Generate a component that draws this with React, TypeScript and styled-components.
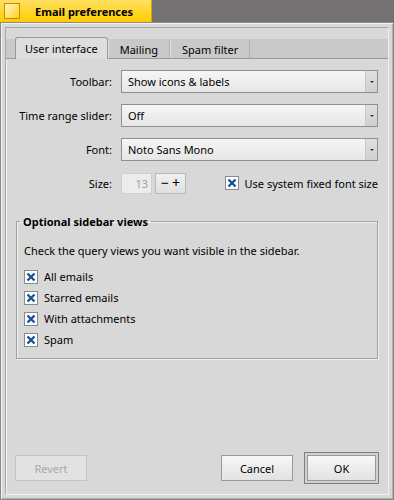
import React from "react"
import styled, { createGlobalStyle } from "styled-components"

const GlobalStyle = createGlobalStyle`
  html, body {
    margin: 0;
    padding: 0;
    background: #737172;
  }
  body {
    font-family: "Noto Sans", "DejaVu Sans", sans-serif;
    font-size: 11px;
    color: #000;
  }
`

const Window = styled.div`
  width: 394px;
  height: 500px;
  display: flex;
  flex-direction: column;
`

const TitleTab = styled.div`
  width: 152px;
  height: 22px;
  box-sizing: border-box;
  display: flex;
  align-items: center;
  gap: 15px;
  padding-left: 4px;
  background: linear-gradient(#ffe162, #ffcb00);
  border-right: 1px solid #d7a400;
  font-weight: 700;
  font-size: 11px;
`

const CloseBox = styled.div`
  width: 14px;
  height: 14px;
  border: 1px solid #c09000;
  background: linear-gradient(135deg, #fff6c4, #ffd020);
`

const Frame = styled.div`
  flex: 1;
  box-sizing: border-box;
  border: 1px solid #8a8a8a;
  box-shadow: inset 1px 1px 0 #f2f2f2, inset -1px -1px 0 #b0b0b0;
  background: #d8d8d8;
  padding: 4px;
  display: flex;
`

const Inner = styled.div`
  flex: 1;
  min-width: 0;
  border: 1px solid #a8a8a8;
  border-bottom-color: #f0f0f0;
  border-right-color: #f0f0f0;
  display: flex;
  flex-direction: column;
  padding-top: 8px;
`

const TabStrip = styled.div`
  display: flex;
  align-items: flex-end;
  height: 22px;
  padding-left: 9px;
  background: linear-gradient(#d8d8d8 0, #d8d8d8 3px, #c9c9c9 3px);
  border-bottom: 1px solid #9a9a9a;
`

const Tab = styled.div<{ $active?: boolean }>`
  box-sizing: border-box;
  height: ${p => (p.$active ? "22px" : "18px")};
  padding: 0 ${p => (p.$active ? "9px" : "11px")};
  display: flex;
  align-items: center;
  background: ${p => (p.$active ? "#dedede" : "#c9c9c9")};
  border: 1px solid ${p => (p.$active ? "#9a9a9a" : "#b3b3b3")};
  border-bottom: none;
  border-top: ${p => (p.$active ? "1px solid #9a9a9a" : "none")};
  border-left-color: ${p => (p.$active ? "#9a9a9a" : "#e0e0e0")};
  border-radius: ${p => (p.$active ? "3px 3px 0 0" : "0")};
  margin-bottom: ${p => (p.$active ? "-1px" : "0")};
  position: relative;
  z-index: ${p => (p.$active ? 1 : 0)};
`

const TabBody = styled.div`
  flex: 1;
  background: #d8d8d8;
  border-left: 1px solid #f4f4f4;
  padding: 11px 10px 0 8px;
  display: flex;
  flex-direction: column;
`

const FormGrid = styled.div`
  display: grid;
  grid-template-columns: 1fr 257px;
  column-gap: 9px;
  row-gap: 11px;
  align-items: center;
`

const Label = styled.div`
  text-align: right;
  white-space: nowrap;
`

const Select = styled.div`
  height: 23px;
  box-sizing: border-box;
  border: 1px solid #8f8f8f;
  display: flex;
  background: linear-gradient(#f6f6f6, #e6e6e6);
`

const SelectText = styled.div`
  flex: 1;
  display: flex;
  align-items: center;
  padding-left: 6px;
`

const SelectArrow = styled.div`
  width: 11px;
  border-left: 1px solid #c8c8c8;
  background: linear-gradient(#e0e0e0, #cfcfcf);
  display: flex;
  align-items: center;
  justify-content: center;
  &::after {
    content: "";
    border-left: 2px solid transparent;
    border-right: 2px solid transparent;
    border-top: 2px solid #333;
  }
`

const SizeRow = styled.div`
  display: flex;
  align-items: center;
  gap: 3px;
  height: 22px;
`

const NumberBox = styled.div`
  width: 31px;
  height: 21px;
  box-sizing: border-box;
  border: 1px solid #cfcfcf;
  background: #ececec;
  color: #a0a0a0;
  display: flex;
  align-items: center;
  justify-content: flex-end;
  padding-right: 3px;
`

const StepButton = styled.div`
  width: 31px;
  height: 21px;
  box-sizing: border-box;
  border: 1px solid #b8b8b8;
  background: linear-gradient(#f0f0f0, #e0e0e0);
  display: flex;
  align-items: center;
  justify-content: center;
  gap: 3px;
  font-size: 14px;
  line-height: 1;
`

const CheckRow = styled.label<{ $push?: boolean }>`
  display: flex;
  align-items: center;
  gap: 6px;
  margin-left: ${p => (p.$push ? "auto" : "0")};
  height: 21px;
`

const Group = styled.fieldset`
  margin: 20px 0 0 1px;
  padding: 1px 7px 8px 7px;
  border: 1px solid #a0a0a0;
  box-shadow: 1px 1px 0 #f0f0f0, inset 1px 1px 0 #f0f0f0;
  display: flex;
  flex-direction: column;
`

const Legend = styled.legend`
  font-weight: 700;
  font-size: 11px;
  padding: 0 3px;
  margin-left: -4px;
`

const Hint = styled.div`
  margin: 13px 0 8px 0;
`

const Buttons = styled.div`
  display: flex;
  align-items: center;
  gap: 14px;
  padding: 14px 2px 13px 0;
`

const Button = styled.div<{ $disabled?: boolean; $default?: boolean }>`
  width: ${p => (p.$default ? "69px" : "72px")};
  height: 26px;
  box-sizing: border-box;
  border: 1px solid ${p => (p.$disabled ? "#c4c4c4" : "#999")};
  background: ${p =>
    p.$disabled ? "#e2e2e2" : "linear-gradient(#f7f7f7, #e2e2e2)"};
  color: ${p => (p.$disabled ? "#a8a8a8" : "#000")};
  display: flex;
  align-items: center;
  justify-content: center;
  box-shadow: ${p => (p.$default ? "0 0 0 2px #d0d0d0, 0 0 0 3px #808080" : "none")};
`

const Spacer = styled.div`
  flex: 1;
`

const CheckIcon = () => (
  <svg width="14" height="14" viewBox="0 0 14 14">
    <rect x="0.5" y="0.5" width="13" height="13" fill="#fff" stroke="#8a8a8a" />
    <path d="M3.5 3.5 L10.5 10.5 M10.5 3.5 L3.5 10.5" stroke="#1a4f9a" strokeWidth="2.4" />
  </svg>
)

const views = ["All emails", "Starred emails", "With attachments", "Spam"]

const App = () => {
  return (
    <Window>
      <GlobalStyle />
      <TitleTab>
        <CloseBox />
        <span>Email preferences</span>
      </TitleTab>
      <Frame>
        <Inner>
          <TabStrip>
            <Tab $active>User interface</Tab>
            <Tab>Mailing</Tab>
            <Tab>Spam filter</Tab>
          </TabStrip>
          <TabBody>
            <FormGrid>
              <Label>Toolbar:</Label>
              <Select>
                <SelectText>Show icons &amp; labels</SelectText>
                <SelectArrow />
              </Select>
              <Label>Time range slider:</Label>
              <Select>
                <SelectText>Off</SelectText>
                <SelectArrow />
              </Select>
              <Label>Font:</Label>
              <Select>
                <SelectText>Noto Sans Mono</SelectText>
                <SelectArrow />
              </Select>
              <Label>Size:</Label>
              <SizeRow>
                <NumberBox>13</NumberBox>
                <StepButton>
                  <span>−</span>
                  <span>+</span>
                </StepButton>
                <CheckRow $push>
                  <CheckIcon />
                  <span>Use system fixed font size</span>
                </CheckRow>
              </SizeRow>
            </FormGrid>
            <Group>
              <Legend>Optional sidebar views</Legend>
              <Hint>Check the query views you want visible in the sidebar.</Hint>
              {views.map(v => (
                <CheckRow key={v}>
                  <CheckIcon />
                  <span>{v}</span>
                </CheckRow>
              ))}
            </Group>
            <Spacer />
            <Buttons>
              <Button $disabled>Revert</Button>
              <Spacer />
              <Button>Cancel</Button>
              <Button $default>OK</Button>
            </Buttons>
          </TabBody>
        </Inner>
      </Frame>
    </Window>
  )
}

export default App
